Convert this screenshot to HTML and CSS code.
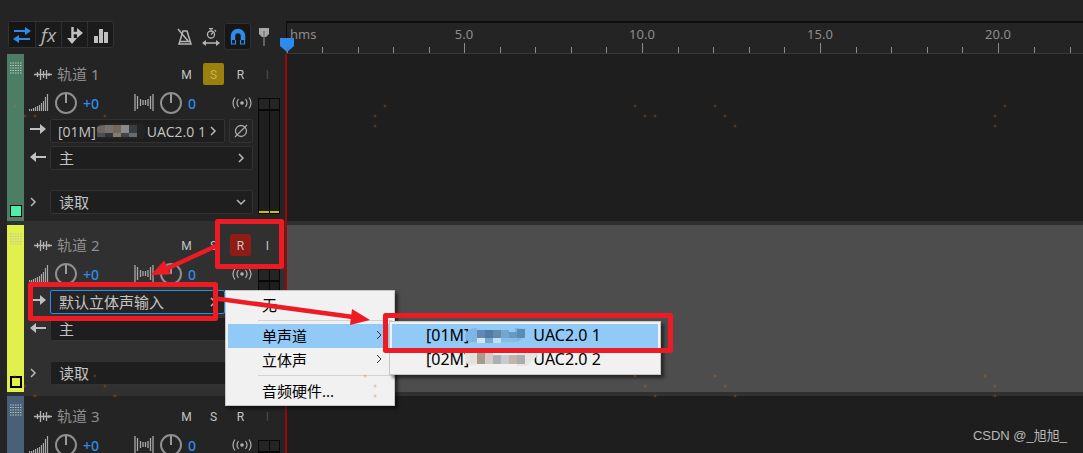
FILE: index.html
```html
<!DOCTYPE html>
<html lang="zh-CN">
<head>
  <meta charset="UTF-8" />
  <meta name="viewport" content="width=device-width, initial-scale=1" />
  <title>多轨编辑器</title>
  <link rel="stylesheet" href="styles.css">
</head>
<body>
  <!-- Iconos compartidos -->
  <svg class="sprite" aria-hidden="true">
    <symbol id="wave" viewBox="0 0 18 16">
      <path d="M0 8.500h18" stroke="#b4b4b4" stroke-width="1.500" />
      <path d="M3.500 6v5M6.500 3v11M9.500 5v7M12.500 4v9M15 7v3" stroke="#b4b4b4" stroke-width="1.300" />
    </symbol>
    <symbol id="volume" viewBox="0 0 20 20">
      <path d="M.5 18v-2M2.500 18v-2M4.500 18v-3M6.500 18v-4M8.500 18v-5M10.500 18V12M12.500 18V10M14.500 18V8M16.500 18V4M18.500 18V1" stroke="#a8a8a8" stroke-width="1.200" />
    </symbol>
    <symbol id="knob" viewBox="0 0 24 24">
      <circle cx="12" cy="12" r="10" fill="none" stroke="#8f8f8f" stroke-width="2" />
      <path d="M12 3v9" stroke="#9a9a9a" stroke-width="2" />
    </symbol>
    <symbol id="pan" viewBox="0 0 20 20">
      <path d="M1 1v17M3.500 3v13M6.500 6v7M9 7v5M11.500 7v5M14 6v7M16.500 3v13M19 1v17" stroke="#a8a8a8" stroke-width="1.300" />
    </symbol>
    <symbol id="monitor" viewBox="0 0 20 16">
      <circle cx="10" cy="8" r="1.800" fill="#b0b0b0" />
      <path d="M6.500 4q-3 4 0 8M3 2.500q-4 5.500 0 11M13.500 4q3 4 0 8M17 2.500q4 5.500 0 11" fill="none" stroke="#b0b0b0" stroke-width="1.200" />
    </symbol>
    <symbol id="arrow-right" viewBox="0 0 16 16">
      <path d="M0 6h12" stroke="#c0c0c0" stroke-width="2" />
      <path d="M10 1l6 5-6 5z" fill="#c0c0c0" />
    </symbol>
    <symbol id="arrow-left" viewBox="0 0 16 16">
      <path d="M4 7h12" stroke="#c0c0c0" stroke-width="2" />
      <path d="M6 2L0 7l6 5z" fill="#c0c0c0" />
    </symbol>
    <symbol id="chevron" viewBox="0 0 12 12">
      <path d="M4 2l4 4-4 4" fill="none" stroke="#b8b8b8" stroke-width="1.500" />
    </symbol>
    <symbol id="chevron-down" viewBox="0 0 12 12">
      <path d="M2 4l4 4 4-4" fill="none" stroke="#b8b8b8" stroke-width="1.500" />
    </symbol>
    <symbol id="phase" viewBox="0 0 16 16">
      <circle cx="8" cy="8" r="5.500" fill="none" stroke="#a8a8a8" stroke-width="1.300" />
      <path d="M2 14L14 2" stroke="#a8a8a8" stroke-width="1.300" />
    </symbol>
    <symbol id="grip" viewBox="0 0 12 12">
      <path d="M0 1h12M0 3.500h12M0 6h12M0 8.500h12M0 11h12" stroke="#b9c4bf" stroke-width="1" stroke-dasharray="1.500 1" />
    </symbol>
  </svg>

  <header class="topbar">
    <div class="toolbar">
      <div class="views">
        <button class="active" aria-label="输入/输出">
          <svg width="18" height="18" viewBox="0 0 18 18"><path d="M1 5h12M5 13h12" stroke="#2d8ceb" stroke-width="2" /><path d="M12 1l6 4-6 4zM6 9l-6 4 6 4z" fill="#2d8ceb" /></svg>
        </button>
        <button class="fx" aria-label="效果">fx</button>
        <button aria-label="发送">
          <svg width="18" height="18" viewBox="0 0 18 18"><path d="M6.500 1v12M6.500 7H13" fill="none" stroke="#c0c0c0" stroke-width="2.500" /><path d="M11 2l6 5-6 5zM1 12h10l-5 6z" fill="#c0c0c0" /></svg>
        </button>
        <button aria-label="EQ">
          <svg width="18" height="18" viewBox="0 0 18 18"><path d="M2 10h4v7H2zM7 3h4v14H7zM12 6h4v11h-4z" fill="#c0c0c0" /></svg>
        </button>
      </div>
      <div class="tools">
        <button aria-label="节拍器">
          <svg width="18" height="18" viewBox="0 0 18 18"><path d="M7 3h4l4 13H3z" fill="none" stroke="#b4b4b4" stroke-width="1.500" /><path d="M2 1l10 12M4 13.500h10" stroke="#b4b4b4" stroke-width="1.500" /></svg>
        </button>
        <button aria-label="时间伸缩">
          <svg width="18" height="18" viewBox="0 0 18 18"><circle cx="9" cy="6.500" r="3.500" fill="none" stroke="#b4b4b4" stroke-width="1.300" /><path d="M7 .5h4M9 .5v2M9 6.500l2-2M12.500 2l1.500 1.500M2 15h14" stroke="#b4b4b4" stroke-width="1.300" /><path d="M4 12l-4 3 4 3zM14 12l4 3-4 3z" fill="#b4b4b4" /></svg>
        </button>
        <button class="snap" aria-label="对齐">
          <svg width="18" height="18" viewBox="0 0 18 18"><path d="M4 12V8a5 5 0 0 1 10 0v4" fill="none" stroke="#2d8ceb" stroke-width="4.500" /><path d="M2.500 12v4h4v-4M11.500 12v4h4v-4" fill="none" stroke="#2d8ceb" stroke-width="1.200" /></svg>
        </button>
        <button aria-label="标记">
          <svg width="18" height="18" viewBox="0 0 18 18"><path d="M4 0h10v6l-3 3H7L4 6z" fill="#a8a8a8" /><path d="M9 3v15" stroke="#777" stroke-width="1.500" /></svg>
        </button>
      </div>
    </div>
    <div class="ruler">
      <div class="major first"><span>hms</span><i></i><i></i><i></i><i></i><i></i></div>
      <div class="major"><span>5.0</span><i></i><i></i><i></i><i></i><i></i></div>
      <div class="major"><span>10.0</span><i></i><i></i><i></i><i></i><i></i></div>
      <div class="major"><span>15.0</span><i></i><i></i><i></i><i></i><i></i></div>
      <div class="major last"><span>20.0</span><i></i><i></i><i></i></div>
      <svg class="playhead-cap" width="14" height="15" viewBox="0 0 14 15"><path d="M0 0h14v8l-7 6-7-6z" fill="#2d8ceb" /><path d="M7 10v5" stroke="#66798c" /></svg>
    </div>
  </header>

  <main class="tracks">
    <section class="track green">
      <div class="strip">
        <svg width="12" height="12"><use href="#grip" /></svg>
        <span class="swatch"></span>
      </div>
      <div class="controls">
        <div class="track-head">
          <svg width="18" height="16"><use href="#wave" /></svg>
          <h2>轨道 1</h2>
          <button>M</button><button class="solo">S</button><button>R</button><button class="off">I</button>
        </div>
        <div class="track-body">
          <div class="track-io">
            <div class="levels">
              <svg width="20" height="20"><use href="#volume" /></svg>
              <button aria-label="音量"><svg width="24" height="24"><use href="#knob" /></svg></button>
              <span>+0</span>
              <svg width="20" height="20"><use href="#pan" /></svg>
              <button aria-label="声像"><svg width="24" height="24"><use href="#knob" /></svg></button>
              <span>0</span>
              <svg width="20" height="16"><use href="#monitor" /></svg>
            </div>
            <div class="io-row">
              <svg width="16" height="16"><use href="#arrow-right" /></svg>
              <div class="picker latin">
                <select aria-label="轨道 1 输入"><option>[01M]&nbsp;&nbsp;&nbsp;&nbsp;&nbsp;&nbsp;&nbsp;&nbsp;&nbsp;&nbsp;&nbsp;&nbsp;&nbsp;&nbsp;UAC2.0 1</option></select>
                <svg class="mosaic" width="54" height="16" viewBox="0 0 54 16">
                  <rect x="3" width="49" height="16" rx="6" fill="#232323" />
                  <path d="M4 4q2-2 8-2v10q-8 0-8-4z" fill="#6b6565" /><path d="M12 2h8v8h-8z" fill="#77716e" /><path d="M20 2h8v8h-8z" fill="#74665d" /><path d="M28 2h8v8h-8z" fill="#8a8a8a" /><path d="M36 2h8v8h-8z" fill="#3a3e42" />
                  <path d="M4 10h8v4H4z" fill="#4c4d55" /><path d="M12 10h8v4h-8z" fill="#333" /><path d="M20 10h8v4h-8z" fill="#837c70" /><path d="M28 10h8v4h-8z" fill="#454545" /><path d="M36 10h8v4h-8z" fill="#666b6f" />
                </svg>
                <svg class="caret" width="12" height="12"><use href="#chevron" /></svg>
              </div>
              <button class="phase" aria-label="反相"><svg width="16" height="16"><use href="#phase" /></svg></button>
            </div>
            <div class="io-row">
              <svg width="16" height="16"><use href="#arrow-left" /></svg>
              <div class="picker">
                <select aria-label="轨道 1 输出"><option>主</option></select>
                <svg class="caret" width="12" height="12"><use href="#chevron" /></svg>
              </div>
            </div>
            <div class="io-row automation">
              <button class="expand" aria-label="展开"><svg width="12" height="12"><use href="#chevron" /></svg></button>
              <div class="picker">
                <select aria-label="轨道 1 自动模式"><option>读取</option></select>
                <svg class="caret" width="12" height="12"><use href="#chevron-down" /></svg>
              </div>
            </div>
          </div>
          <div class="meter"><span></span><span></span></div>
        </div>
      </div>
      <div class="lane"></div>
    </section>

    <section class="track yellow selected">
      <div class="strip">
        <svg width="12" height="12"><use href="#grip" /></svg>
        <span class="swatch"></span>
      </div>
      <div class="controls">
        <div class="track-head">
          <svg width="18" height="16"><use href="#wave" /></svg>
          <h2>轨道 2</h2>
          <button>M</button><button>S</button><button class="armed">R</button><button>I</button>
        </div>
        <div class="track-body">
          <div class="track-io">
            <div class="levels">
              <svg width="20" height="20"><use href="#volume" /></svg>
              <button aria-label="音量"><svg width="24" height="24"><use href="#knob" /></svg></button>
              <span>+0</span>
              <svg width="20" height="20"><use href="#pan" /></svg>
              <button aria-label="声像"><svg width="24" height="24"><use href="#knob" /></svg></button>
              <span>0</span>
              <svg width="20" height="16"><use href="#monitor" /></svg>
            </div>
            <div class="io-row">
              <svg width="16" height="16"><use href="#arrow-right" /></svg>
              <div class="picker focused">
                <select aria-label="轨道 2 输入"><option>默认立体声输入</option></select>
                <svg class="caret" width="12" height="12"><use href="#chevron" /></svg>
                <!-- Menú de entrada abierto -->
                <div class="menu">
                  <button>无</button>
                  <hr>
                  <div class="branch">
                    <button class="hot">单声道<svg class="more" width="12" height="12" viewBox="0 0 12 12"><path d="M4 2l4 4-4 4" /></svg></button>
                    <div class="menu submenu">
                      <button class="hot">[01M]<svg class="hidden-name" width="64" height="18" viewBox="0 0 64 18">
                        <path d="M0 9q2-7 12-7v14H6Q0 16 0 9zM50 2q12 0 10 7-4 6-10 7z" fill="#7fb5e2" />
                        <path d="M12 4h8v8h-8z" fill="#6388b5" /><path d="M20 4h8v8h-8z" fill="#527aa7" /><path d="M28 4h8v8h-8z" fill="#628cac" /><path d="M36 4h8v8h-8z" fill="#74a5cc" /><path d="M44 6h8v6h-8z" fill="#6699c1" /><path d="M52 3h8v9h-8z" fill="#5a8db4" />
                        <path d="M12 12h8v5h-8z" fill="#d7e5f3" /><path d="M20 12h8v5h-8z" fill="#75a9d2" /><path d="M28 12h8v5h-8z" fill="#c4dff4" /><path d="M36 12h16v4H36z" fill="#89bce5" />
                      </svg>UAC2.0 1</button>
                      <button>[02M]<svg class="hidden-name" width="64" height="18" viewBox="0 0 64 18">
                        <path d="M0 2h12v13H6Q0 14 0 9zM52 2h20q0 6-4 8l-6 6H52z" fill="#e8e6e3" />
                        <path d="M4 5h8v8H4z" fill="#e6dfd7" /><path d="M12 3h8v11h-8z" fill="#a79b8f" /><path d="M20 3h8v11h-8z" fill="#d3cbc4" /><path d="M28 5h8v9h-8z" fill="#adb0b2" /><path d="M36 5h8v9h-8z" fill="#c7cbd0" /><path d="M44 5h8v9h-8z" fill="#beb5aa" /><path d="M52 5h8v9h-8z" fill="#aaacad" />
                      </svg>UAC2.0 2</button>
                    </div>
                  </div>
                  <button>立体声<svg class="more" width="12" height="12" viewBox="0 0 12 12"><path d="M4 2l4 4-4 4" /></svg></button>
                  <hr>
                  <button>音频硬件...</button>
                </div>
              </div>
              <button class="phase" aria-label="反相"><svg width="16" height="16"><use href="#phase" /></svg></button>
            </div>
            <div class="io-row">
              <svg width="16" height="16"><use href="#arrow-left" /></svg>
              <div class="picker">
                <select aria-label="轨道 2 输出"><option>主</option></select>
                <svg class="caret" width="12" height="12"><use href="#chevron" /></svg>
              </div>
            </div>
            <div class="io-row automation">
              <button class="expand" aria-label="展开"><svg width="12" height="12"><use href="#chevron" /></svg></button>
              <div class="picker">
                <select aria-label="轨道 2 自动模式"><option>读取</option></select>
                <svg class="caret" width="12" height="12"><use href="#chevron-down" /></svg>
              </div>
            </div>
          </div>
          <div class="meter"><span></span><span></span></div>
        </div>
      </div>
      <div class="lane"></div>
    </section>

    <section class="track blue">
      <div class="strip">
        <svg width="12" height="12"><use href="#grip" /></svg>
      </div>
      <div class="controls">
        <div class="track-head">
          <svg width="18" height="16"><use href="#wave" /></svg>
          <h2>轨道 3</h2>
          <button>M</button><button>S</button><button>R</button><button class="off">I</button>
        </div>
        <div class="track-body">
          <div class="track-io">
            <div class="levels">
              <svg width="20" height="20"><use href="#volume" /></svg>
              <button aria-label="音量"><svg width="24" height="24"><use href="#knob" /></svg></button>
              <span>+0</span>
              <svg width="20" height="20"><use href="#pan" /></svg>
              <button aria-label="声像"><svg width="24" height="24"><use href="#knob" /></svg></button>
              <span>0</span>
              <svg width="20" height="16"><use href="#monitor" /></svg>
            </div>
          </div>
          <div class="meter"><span></span><span></span></div>
        </div>
      </div>
      <div class="lane"></div>
    </section>
    <div class="playhead"></div>
  </main>

  <!-- Anotaciones -->
  <svg class="notes" width="1083" height="453" viewBox="0 0 1083 453" aria-hidden="true">
    <path class="specks" d="M15 106h0M25 116h0M35 116h0M105 116h0M385 106h0M375 116h0M375 126h0M635 106h0M645 116h0M655 116h0M715 106h0M725 116h0M735 126h0M1005 106h0M995 116h0M995 126h0M15 376h0M95 376h0M25 386h0M105 386h0M35 396h0M115 396h0M365 376h0M375 386h0M375 396h0M635 376h0M645 386h0M655 396h0M715 376h0M725 386h0M735 396h0M985 376h0M995 386h0M995 396h0" />
    <g fill="none" stroke="#ed1c24" stroke-width="5" stroke-linejoin="round">
      <rect x="217.500" y="221.500" width="64" height="45" />
      <rect x="30.500" y="284.500" width="185" height="34" />
      <rect x="385.500" y="315.500" width="285" height="35" />
      <path d="M216 246L164 270M216 298.500L353 317" stroke-width="4.500" />
    </g>
    <path d="M151 275l13-14.500 7 14zM370 320l-20 5 2-16z" fill="#ed1c24" />
  </svg>
  <footer class="credit">CSDN @_旭旭_</footer>
</body>
</html>
```
FILE: styles.css
```css
* {
  box-sizing: border-box;
}

body {
  margin: 0;
  height: 100vh;
  display: flex;
  flex-direction: column;
  overflow: hidden;
  position: relative;
  background: #242424;
  color: #c4c4c4;
  font-family: "Noto Sans", "Noto Sans CJK SC", sans-serif;
  font-size: 15px;
}

button, select {
  font: inherit;
  color: inherit;
  border: 0;
  padding: 0;
  margin: 0;
  background: none;
  outline: none;
}

svg {
  display: block;
  flex: none;
}

.sprite {
  position: absolute;
  width: 0;
  height: 0;
}

/* Barra superior */
.topbar {
  display: flex;
  flex: none;
  height: 54px;
}

.toolbar {
  width: 286px;
  flex: none;
  display: flex;
  justify-content: space-between;
  align-items: flex-end;
  padding: 0 9px 4px 8px;
}

.views {
  display: flex;
  margin-bottom: 2px;
  background: #1b1b1b;
  border: 1px solid #333;
  border-radius: 3px;
}

.views button {
  width: 26px;
  height: 25px;
  display: grid;
  place-items: center;
}

.views button + button {
  border-left: 1px solid #303030;
}

.views .active {
  background: #161616;
}

.views .fx {
  font: italic 19px/22px "Open Sans", sans-serif;
  color: #b4b4b4;
}

.tools {
  display: flex;
  align-items: center;
}

.tools button {
  width: 26px;
  height: 27px;
  display: grid;
  place-items: center;
}

.tools .snap {
  width: 27px;
  background: #161616;
  border: 1px solid #303030;
  border-radius: 3px;
}

.ruler {
  flex: 1;
  min-width: 0;
  display: flex;
  position: relative;
  margin-top: 21px;
  border-top: 2px solid #0c0c0c;
  border-bottom: 1px solid #383838;
  color: #8c8c8c;
  font-size: 13px;
}

.major {
  position: relative;
  display: flex;
  align-items: flex-end;
  flex: 0 0 178px;
}

.major span {
  position: absolute;
  left: 0;
  top: 2px;
  line-height: 18px;
  transform: translateX(-50%);
}

.major i {
  flex: 1;
  height: 6px;
  border-left: 1px solid #8c8c8c;
}

.major i:nth-of-type(1) {
  height: 10px;
}

.first {
  border-left: 1px solid #0c0c0c;
}

.first span {
  left: 3px;
  transform: none;
}

.major.last {
  flex: 1 1 0;
  min-width: 0;
}

.last i {
  flex: 0 0 36px;
}

.last i:last-child {
  flex: 1 1 0;
}

.playhead-cap {
  position: absolute;
  left: -6px;
  bottom: 0;
}

/* Pistas */
.tracks {
  position: relative;
  flex: 1;
  min-height: 0;
  display: flex;
  flex-direction: column;
  gap: 4px;
  margin-left: 7px;
  background: #303030;
}

.track {
  display: flex;
  flex: none;
  height: 167px;
  background: #242424;
}

.track.blue {
  flex: 1;
  height: auto;
  min-height: 0;
  overflow: hidden;
}

.strip {
  width: 17px;
  flex: none;
  display: flex;
  flex-direction: column;
  justify-content: space-between;
  align-items: center;
  padding: 8px 0 4px;
}

.green .strip {
  background: #4c7d67;
}

.yellow .strip {
  background: #e2f04b;
}

.blue .strip {
  background: #4a6078;
}

.swatch {
  width: 12px;
  height: 12px;
  border: 1px solid #000;
  background: #4df0ab;
}

.yellow .swatch {
  background: #e2f04b;
  border-width: 2px;
}

.controls {
  width: 262px;
  flex: none;
  display: flex;
  flex-direction: column;
}

.track.selected {
  background: #303030;
}

.track-head {
  display: flex;
  flex: none;
  align-items: center;
  gap: 6px;
  height: 34px;
  padding: 6px 8px 0 10px;
}

.track-head h2 {
  flex: 1;
  margin: 0 0 0 -1px;
  font-size: 15px;
  font-weight: 400;
  line-height: 24px;
  color: #8e8e8e;
}

.track-head button {
  width: 21px;
  height: 22px;
  padding-top: 2px;
  border-radius: 2px;
  font-family: Roboto, sans-serif;
  font-size: 12px;
}

.track-head .solo {
  background: #9a800c;
  color: #c8b45a;
}

.track-head .armed {
  background: #8f1d16;
}

.track-head .off {
  color: #4c4c4c;
}

.track-body {
  display: flex;
  flex: 1;
  min-height: 0;
}

.track-io {
  width: 229px;
}

.levels {
  display: grid;
  grid-template-columns: 20px 24px 46px 20px 24px 39px 20px;
  gap: 5px;
  align-items: center;
  height: 30px;
  padding-left: 5px;
  font-size: 14px;
  font-weight: 500;
  color: #2d8ceb;
}

.io-row {
  display: flex;
  align-items: center;
  gap: 4px;
  height: 24px;
  margin-top: 3px;
  padding-left: 6px;
}

.levels + .io-row {
  margin-top: 1px;
}

.automation {
  margin-top: 20px;
  padding-left: 3px;
}

.expand {
  width: 19px;
}

.picker {
  position: relative;
  flex: 1;
  display: flex;
  height: 24px;
}

.picker select {
  width: 100%;
  appearance: none;
  padding: 0 20px 0 8px;
  background: #1e1e1e;
  border: 1px solid #323232;
  border-radius: 2px;
}

.latin select {
  padding-left: 7px;
  font-size: 14px;
  font-family: "Open Sans", sans-serif;
}

.focused select {
  background: #242424;
  border-color: #2d8ceb;
}

.caret {
  position: absolute;
  right: 6px;
  top: 6px;
}

.mosaic {
  position: absolute;
  left: 43px;
  top: 4px;
}

.phase {
  display: grid;
  place-items: center;
  width: 24px;
  height: 24px;
  border: 1px solid #323232;
  border-radius: 2px;
}

.meter {
  display: flex;
  gap: 1px;
  width: 22px;
  max-height: 116px;
  margin: 10px 0 0 5px;
  padding: 1px;
  background: #080808;
}

.meter span {
  flex: 1;
  background: linear-gradient(#242424 10px, #080808 10px 12px, #1e1e1e 12px);
}

.green .meter span {
  border-bottom: 2px solid #c8c000;
}

.lane {
  flex: 1;
  background: #1e1e1e;
}

.selected .lane {
  background: #4d4d4d;
}

.playhead {
  position: absolute;
  left: 278px;
  top: 0;
  bottom: 0;
  width: 2px;
  background: #9c0808;
}

/* Menús desplegables */
.menu {
  position: absolute;
  z-index: 2;
  left: 175px;
  top: 0;
  width: 170px;
  padding: 2px;
  background: #f1f1f1;
  border: 1px solid #c6c6c6;
  box-shadow: 3px 3px 3px rgba(0, 0, 0, 0.5);
  color: #000;
}

.menu button {
  display: flex;
  align-items: center;
  width: 100%;
  height: 24px;
  padding: 0 7px 2px 34px;
  text-align: left;
  white-space: nowrap;
}

.more {
  margin-left: auto;
  fill: none;
  stroke: #333;
}

.menu .hot {
  background: #91c9f7;
}

.menu hr {
  height: 1px;
  margin: 3px 0 3px 30px;
  border: 0;
  background: #d2d2d2;
}

.branch {
  position: relative;
}

.submenu {
  left: 161px;
  top: -3px;
  width: 272px;
  font-size: 16px;
}

.hidden-name {
  z-index: 1;
  margin: 0 4px 0 -4px;
  overflow: visible;
}

/* Anotaciones */
.notes {
  position: absolute;
  z-index: 3;
  left: 0;
  top: 0;
  pointer-events: none;
}

.specks {
  stroke: #d2691e;
  stroke-opacity: 0.3;
  stroke-width: 3;
  stroke-linecap: round;
}

.credit {
  position: absolute;
  z-index: 3;
  right: 16px;
  bottom: 7px;
  color: #b8b8b8;
  font-family: "Liberation Sans", "Noto Sans CJK SC", sans-serif;
  font-size: 13px;
  line-height: 20px;
}
```
